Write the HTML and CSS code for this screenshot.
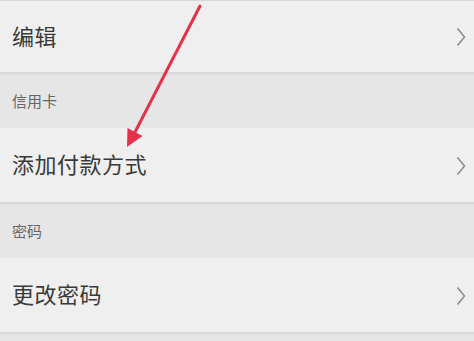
FILE: index.html
```html
<!DOCTYPE html>
<html lang="zh-CN">
<head>
<meta charset="utf-8">
<link rel="stylesheet" href="styles.css">
</head>
<body>
<div class="page">
  <div class="list">
    <div class="sep sep-top"></div>
    <div class="row row-first">
      <span class="label">编辑</span>
      <svg class="chev" viewBox="0 0 10 20" width="10" height="20"><path d="M1.5 1.5 L8.5 10 L1.5 18.5" fill="none" stroke="#8a8a8a" stroke-width="1.5"/></svg>
    </div>
    <div class="sep"></div>
    <div class="header">信用卡</div>
    <div class="row">
      <span class="label">添加付款方式</span>
      <svg class="chev" viewBox="0 0 10 20" width="10" height="20"><path d="M1.5 1.5 L8.5 10 L1.5 18.5" fill="none" stroke="#8a8a8a" stroke-width="1.5"/></svg>
    </div>
    <div class="sep"></div>
    <div class="header">密码</div>
    <div class="row">
      <span class="label">更改密码</span>
      <svg class="chev" viewBox="0 0 10 20" width="10" height="20"><path d="M1.5 1.5 L8.5 10 L1.5 18.5" fill="none" stroke="#8a8a8a" stroke-width="1.5"/></svg>
    </div>
    <div class="sep"></div>
    <div class="header"></div>
  </div>
  <svg class="arrow" viewBox="0 0 474 341" width="474" height="341">
    <line x1="200" y1="6" x2="133" y2="136" stroke="#e3334c" stroke-width="3" stroke-linecap="round"/>
    <polygon points="127,147 127.5,128 142.5,136" fill="#e3334c"/>
  </svg>
</div>
</body>
</html>
```
FILE: styles.css
```css
html, body {
  margin: 0;
  padding: 0;
  background: #e6e6e6;
}
body {
  font-family: "Noto Sans CJK SC", "Noto Sans", sans-serif;
  width: 474px;
  height: 341px;
  overflow: hidden;
}
.page {
  position: relative;
  width: 474px;
  height: 341px;
  overflow: hidden;
}
.list {
  display: flex;
  flex-direction: column;
}
.sep {
  height: 3px;
  background: linear-gradient(#d6d6d6, #dcdcdc 60%, #e2e2e2);
  flex: none;
}
.sep-top {
  height: 1px;
  background: #d8d8d8;
}
.row {
  height: 74px;
  flex: none;
  background: #efefef;
  display: flex;
  align-items: center;
  justify-content: space-between;
  padding: 0 8px 0 12px;
  box-sizing: border-box;
}
.row-first {
  height: 71px;
}
.label {
  font-size: 22px;
  line-height: 1;
  color: #3a3a3a;
  letter-spacing: 0.5px;
  margin-bottom: 4px;
}
.chev {
  display: block;
  margin-top: 1px;
}
.header {
  height: 53px;
  flex: none;
  background: #e6e6e6;
  display: flex;
  align-items: center;
  padding-left: 12px;
  padding-bottom: 2px;
  box-sizing: border-box;
  font-size: 15px;
  color: #666666;
}
.arrow {
  position: absolute;
  left: 0;
  top: 0;
  pointer-events: none;
}
```
